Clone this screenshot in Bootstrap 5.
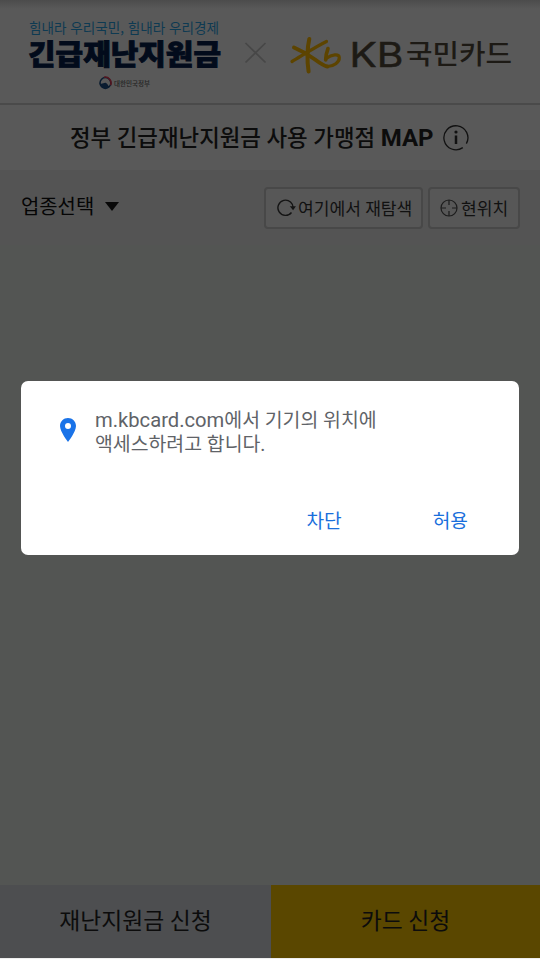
<!DOCTYPE html>
<html lang="ko">
<head>
<meta charset="utf-8">
<meta name="viewport" content="width=device-width, initial-scale=1">
<title>정부 긴급재난지원금 사용 가맹점 MAP</title>
<link href="https://cdn.jsdelivr.net/npm/bootstrap@5.3.0/dist/css/bootstrap.min.css" rel="stylesheet">
<style>
body{font-family:Roboto,"Noto Sans CJK KR",sans-serif;background:#535553;color:#0c0c0c;height:959px;overflow:hidden}
svg{display:block;flex:none}
svg text{font-family:"Noto Sans CJK KR",sans-serif}
.brandbar{height:105px;background:linear-gradient(#4c4c4c,#595959 9px);border-bottom:2px solid #4a4a4a}
.titlebar{height:65px;background:#595959;padding-left:70px;gap:9px}
.titlebar h1{font-size:22.4px;font-weight:500;line-height:30px;white-space:nowrap;width:364px}
.titlebar b{font-weight:700;font-size:24px}
.filterbar{height:75px;background:#545454;padding:17px 20px 16px 21px}
.category{font-size:19.9px;line-height:28px;gap:11px;height:38px;color:#050505}
.category span{padding-top:3px}
.tool{height:42px;border:2px solid #484848;border-radius:4px;background:#575757;font-size:17.1px;line-height:24px;white-space:nowrap;color:#111;padding:0}
.tool span{padding-top:2px}
.tool-search{width:159px;padding-left:11px;gap:2px}
.tool-here{width:92px;padding-left:10px;gap:3px}
.tools{gap:5px}
.map{height:640px;padding:136px 21px 0}
.prompt{width:498px;height:174px;background:#fff;border-radius:7px;color:#5f6368}
.prompt p{font-size:19.4px;line-height:24px;margin:0}
.prompt .host{font-size:20.2px}
.prompt-text{padding:27px 0 0 39px;gap:19px}
.prompt-actions{padding:0 51px 0 0;gap:91px;margin-top:51px}
.prompt-actions .btn{font-size:19.2px;line-height:28px;color:#1a6fdc;padding:0;border:0}
.bottombar{height:73px;font-size:22.8px;line-height:30px;color:#0c0c0c}
.bottombar>div{height:73px;padding-top:1px}
.relief{background:#4d4e50;width:271px}
.cardapply{background:#5a4700;width:269px}
.edge{height:1px;background:#eee}
</style>
<script src="https://cdn.jsdelivr.net/npm/bootstrap@5.3.0/dist/js/bootstrap.bundle.min.js"></script>
</head>
<body class="d-flex flex-column">
<header class="brandbar">
<svg width="540" height="103" viewBox="0 0 540 103">
<text x="29" y="32.800" font-size="14" font-weight="400" fill="#0e3a52" textLength="190" lengthAdjust="spacingAndGlyphs">힘내라 우리국민, 힘내라 우리경제</text>
<text x="28" y="64.500" font-size="28" font-weight="900" fill="#020b1b" stroke="#020b1b" stroke-width=".9" textLength="193" lengthAdjust="spacingAndGlyphs">긴급재난지원금</text>
<circle cx="105.400" cy="83" r="5.400" fill="none" stroke="#0a1c30" stroke-width="1.500"/>
<path d="M99.500 82.500c1.500 3 4.500-.3 6.500.5 2.500 1 1.500 3.500 4 3.200a6 6 0 0 1-10.500-3.700" fill="#0a1c30"/>
<path d="M104 77.200a6 6 0 0 1 6.700 8" fill="none" stroke="#54151f" stroke-width="1.500"/>
<text x="114" y="85.600" font-size="7" font-weight="500" fill="#242424" textLength="36" lengthAdjust="spacingAndGlyphs">대한민국정부</text>
<path d="M245.500 43l20 19.500m0-19.500l-20 19.500" stroke="#474747" stroke-width="1.700"/>
<g fill="none" stroke="#5d4400" stroke-width="4" stroke-linecap="round" stroke-linejoin="round">
<path d="M309.300 39c-2 8-2.500 22-.700 32.500"/>
<path d="M294 47.500c7 3 15 7.500 21 12 4 3 8 6 12.300 7"/>
<path d="M326.500 41.500C317 46 303 55 292 61.500" stroke-width="3.200"/>
<path d="M328 48.500c-1.500 4-2.300 7.500-2.300 11.500" stroke-width="3.600"/>
<path d="M326 58.500c6-4.500 13-5 13.300-1 .3 4.500-5.500 9-12 9" stroke-width="3.200"/>
</g>
<text x="349.500" y="66.500" font-size="34" style="font-family:Inter,sans-serif" font-weight="400" fill="#1d1a15" stroke="#1d1a15" stroke-width=".5" textLength="54" lengthAdjust="spacingAndGlyphs">KB</text>
<text x="406" y="64.300" font-size="27.500" font-weight="500" fill="#1d1a15" textLength="106" lengthAdjust="spacingAndGlyphs">국민카드</text>
</svg>
</header>
<section class="titlebar d-flex align-items-center">
<h1 class="m-0">정부 긴급재난지원금 사용 가맹점 <b>MAP</b></h1>
<svg width="27" height="27" viewBox="0 0 27 27"><path d="M19.800 23.600a12 12 0 1 1 3.600-4" fill="none" stroke="#111" stroke-width="1.300"/><circle cx="13" cy="8" r="1.600" fill="#111"/><path d="M13 11.500v8.500" stroke="#111" stroke-width="2.500"/></svg>
</section>
<section class="filterbar d-flex justify-content-between">
<div class="category d-flex align-items-center"><span>업종선택</span><svg width="14" height="9" viewBox="0 0 14 9"><path d="M0 0h14L7 9z" fill="#080808"/></svg></div>
<div class="tools d-flex align-items-start">
<button class="tool tool-search d-flex align-items-center"><svg width="19" height="18" viewBox="0 0 19 18"><path d="M14.500 13.500a7.600 7.600 0 1 1 1.600-4" fill="none" stroke="#141414" stroke-width="1.400"/><path d="M12.800 7.300h6.100l-2.800 4z" fill="#141414"/></svg><span>여기에서 재탐색</span></button>
<button class="tool tool-here d-flex align-items-center"><svg width="18" height="18" viewBox="0 0 18 18"><g fill="none" stroke="#1c1c1c" stroke-width="1.200"><circle cx="9" cy="9" r="8"/><path d="M9 1v5m0 6v5M1 9h5m6 0h5"/></g></svg><span>현위치</span></button>
</div>
</section>
<main class="map">
<div class="prompt" role="dialog">
<div class="prompt-text d-flex align-items-start"><svg class="mt-2" width="16" height="26" viewBox="0 0 16 26"><path fill-rule="evenodd" d="M8 2C3.600 2 0 5.500 0 10c0 5.800 8 16 8 16s8-10.200 8-16c0-4.500-3.600-8-8-8m0 5a3 3 0 1 1 0 6 3 3 0 0 1 0-6" fill="#1a73e8"/></svg>
<p><span class="host">m.kbcard.com</span>에서 기기의 위치에<br>액세스하려고 합니다.</p></div>
<div class="prompt-actions d-flex justify-content-end"><button class="btn">차단</button><button class="btn">허용</button></div>
</div>
</main>
<footer class="bottombar d-flex text-center">
<div class="relief d-flex align-items-center justify-content-center">재난지원금 신청</div>
<div class="cardapply d-flex align-items-center justify-content-center">카드 신청</div>
</footer>
<div class="edge"></div>
</body>
</html>
